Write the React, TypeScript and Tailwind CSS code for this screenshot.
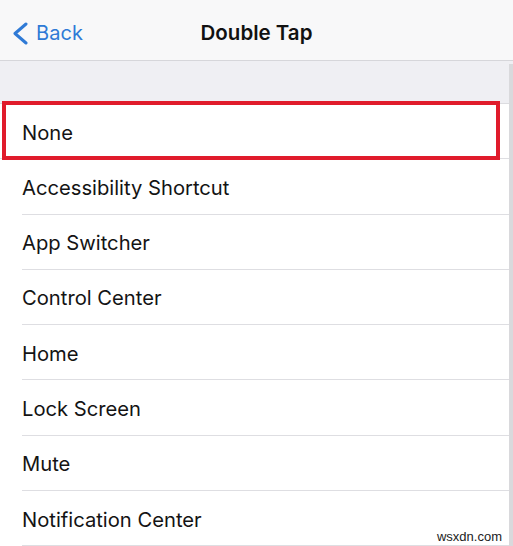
import React from 'react';

const OPTIONS = [
  'None',
  'Accessibility Shortcut',
  'App Switcher',
  'Control Center',
  'Home',
  'Lock Screen',
  'Mute',
  'Notification Center',
];

const App: React.FC = () => {
  return (
    <div
      className="relative w-[513px] h-[546px] overflow-hidden bg-white"
      style={{ fontFamily: 'Inter, "Liberation Sans", sans-serif' }}
    >
      {/* nav bar */}
      <div className="relative h-[61px] bg-[#f8f8f9] border-b border-[#d6d6da] flex items-center pt-[6px]">
        <div className="flex items-center pl-[12px] gap-[8px] text-[#2f7ad6]">
          <svg width="16" height="23" viewBox="0 0 16 23" fill="none">
            <path d="M14 2 L3 11.5 L14 21" stroke="currentColor" strokeWidth="3" strokeLinecap="round" strokeLinejoin="round" />
          </svg>
          <span className="text-[20px] leading-none tracking-[0.1px]">Back</span>
        </div>
        <div className="absolute inset-x-0 top-0 h-full flex items-center justify-center pt-[6px] pointer-events-none">
          <span className="text-[20.5px] font-semibold text-[#111] leading-none">Double Tap</span>
        </div>
      </div>

      {/* grouped header */}
      <div className="h-[43px] bg-[#efeff3] border-b border-[#dcdce0]" />

      {/* list */}
      <div className="flex flex-col">
        {OPTIONS.map((label, i) => (
          <div key={label} className="relative h-[55.3px] flex items-center pl-[22px] pt-[2px]">
            <span className="text-[20.2px] text-[#141414] leading-none">{label}</span>
            <div
              className={`absolute bottom-0 right-0 h-px bg-[#dedee2] ${i === 0 ? 'left-0' : 'left-[22px]'}`}
            />
          </div>
        ))}
      </div>

      {/* highlight around "None" */}
      <div className="absolute left-[2px] top-[101px] w-[498px] h-[59px] border-[4px] border-[#e01b2b]" />

      {/* right edge strip */}
      <div className="absolute right-0 top-[64px] bottom-0 w-[4px] bg-[#d9d9dc]" />

      {/* watermark */}
      <span
        className="absolute right-[11px] bottom-[3px] text-[13px] text-[#222] leading-none"
        style={{ fontFamily: '"Liberation Sans", sans-serif' }}
      >
        wsxdn.com
      </span>
    </div>
  );
};

export default App;
